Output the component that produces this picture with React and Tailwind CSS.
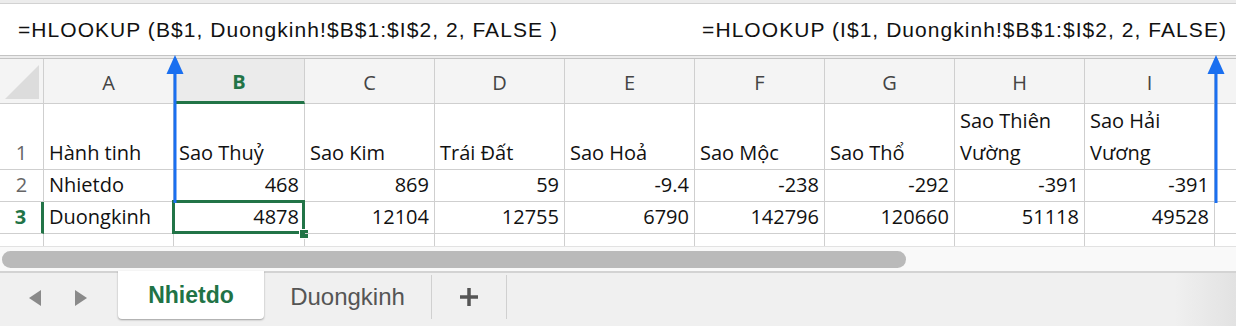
import React from 'react'

const cols = ['A', 'B', 'C', 'D', 'E', 'F', 'G', 'H', 'I']

const rows = [
  { n: '1', h: 'h-[66px]', cells: [['Hành tinh'], ['Sao Thuỷ'], ['Sao Kim'], ['Trái Đất'], ['Sao Hoả'], ['Sao Mộc'], ['Sao Thổ'], ['Sao Thiên', 'Vường'], ['Sao Hải', 'Vương']] },
  { n: '2', h: 'h-[32px]', cells: ['Nhietdo', 468, 869, 59, -9.4, -238, -292, -391, -391] },
  { n: '3', h: 'h-[32px]', cells: ['Duongkinh', 4878, 12104, 12755, 6790, 142796, 120660, 51118, 49528], active: true },
]

const gridCols = 'grid grid-cols-[44px_130px_131px_130px_130px_130px_130px_130px_130px_130px_1fr]'

const Arrow = ({ className }) => (
  <svg className={className} width="18" height="148" viewBox="0 0 18 148">
    <path d="M9 0 L17.5 19 L0.5 19 Z" fill="#1a6ff0" />
    <rect x="7.5" y="17" width="3" height="131" fill="#1a6ff0" />
  </svg>
)

function Cell({ v }) {
  if (Array.isArray(v)) {
    return (
      <div className="flex flex-col justify-end pl-[5px] leading-[32px]">
        {v.map(t => <span key={t} className="whitespace-nowrap">{t}</span>)}
      </div>
    )
  }
  const num = typeof v === 'number'
  return (
    <div className={`flex items-center h-full leading-[32px] ${num ? 'justify-end pr-[5px]' : 'pl-[5px]'}`}>{v}</div>
  )
}

export default function App() {
  return (
    <div className="relative w-[1236px] h-[326px] overflow-hidden bg-white" style={{ fontFamily: '"Open Sans", Lato, sans-serif' }}>
      {/* formula bar */}
      <div className="h-[4px] bg-[#ececec] border-b border-[#d2d2d2]" />
      <div className="h-[51px] flex items-center justify-between pl-[18px] pr-[9px] text-[21px] tracking-[1.05px] text-[#111] bg-white" style={{ fontFamily: '"Liberation Sans", Arial, sans-serif' }}>
        <span>=HLOOKUP (B$1, Duongkinh!$B$1:$I$2, 2, FALSE )</span>
        <span>=HLOOKUP (I$1, Duongkinh!$B$1:$I$2, 2, FALSE)</span>
      </div>
      <div className="h-[4px] border-y border-[#c4c4c4] bg-[#ececec]" />

      {/* sheet grid */}
      <div className={`${gridCols} text-[20px] text-[#111]`}>
        {/* header row */}
        <div className="relative h-[45px] bg-[#f4f4f4] border-r border-b border-[#cfcfcf]">
          <div className="absolute right-[4px] bottom-[4px] w-0 h-0 border-l-[34px] border-l-transparent border-b-[34px] border-b-[#dcdcdc]" />
        </div>
        {cols.map(c => (
          <div key={c} className={`h-[45px] flex items-center justify-center pt-[4px] border-r border-[#cfcfcf] ${c === 'B' ? 'bg-[#ebebeb] border-b-[3px] border-b-[#227447] text-[#227447] font-bold' : 'bg-[#f4f4f4] border-b border-b-[#cfcfcf] text-[#444]'}`}>{c}</div>
        ))}
        <div className="h-[45px] bg-[#f4f4f4] border-b border-[#cfcfcf]" />

        {rows.map(r => (
          <React.Fragment key={r.n}>
            <div className={`${r.h} flex items-end justify-center leading-[32px] border-b border-[#cfcfcf] ${r.active ? 'text-[#227447] font-bold border-r-[3px] border-r-[#227447]' : 'text-[#666] border-r border-r-[#cfcfcf]'}`}>{r.n}</div>
            {r.cells.map((v, i) => (
              <div key={i} className={`${r.h} relative flex items-end border-r border-b border-[#cfcfcf]`}>
                <div className="w-full"><Cell v={v} /></div>
                {r.active && i === 1 && (
                  <>
                    <div className="absolute -left-[2px] -top-[2px] -right-[1px] -bottom-[1px] border-[3px] border-[#227447]" />
                    <div className="absolute -right-[5px] -bottom-[6px] w-[10px] h-[10px] bg-[#227447] border border-white" />
                  </>
                )}
              </div>
            ))}
            <div className={`${r.h} border-b border-[#cfcfcf]`} />
          </React.Fragment>
        ))}

        {/* partial row 4 */}
        {Array.from({ length: 11 }).map((_, i) => (
          <div key={i} className={`h-[12px] ${i < 10 ? 'border-r border-[#cfcfcf]' : ''}`} />
        ))}
      </div>

      {/* horizontal scrollbar */}
      <div className="h-[25px] bg-[#f9f9f9] border-t border-[#e2e2e2] flex items-center px-[2px]">
        <div className="w-[904px] h-[17px] rounded-full bg-[#bababa]" />
      </div>

      {/* sheet tabs */}
      <div className="h-[55px] border-t-2 border-[#d3d3d3] bg-gradient-to-r from-[#f0f0f0] via-[#f0f0f0] via-95% to-[#e2e2e2] flex items-start">
        <div className="w-[118px] h-[50px] flex items-center gap-[32px] pl-[28px]">
          <svg width="14" height="18" viewBox="0 0 14 18"><path d="M13 1 L1 9 L13 17 Z" fill="#8a8a8a" /></svg>
          <svg width="14" height="18" viewBox="0 0 14 18"><path d="M1 1 L13 9 L1 17 Z" fill="#8a8a8a" /></svg>
        </div>
        <div className="w-[146px] h-[48px] -mt-[2px] bg-white rounded-b-[4px] shadow-[0_1px_2px_rgba(0,0,0,0.35)] flex items-center justify-center text-[23px] font-bold text-[#217346]" style={{ fontFamily: '"Liberation Sans", Arial, sans-serif' }}>Nhietdo</div>
        <div className="w-[168px] h-[44px] mt-[2px] border-r border-[#d0d0d0] flex items-center justify-center text-[24px] text-[#555]" style={{ fontFamily: '"Liberation Sans", Arial, sans-serif' }}>Duongkinh</div>
        <div className="w-[75px] h-[44px] mt-[2px] border-r border-[#d0d0d0] flex items-center justify-center">
          <svg width="20" height="20" viewBox="0 0 20 20"><path d="M10 1 V19 M1 10 H19" stroke="#555" strokeWidth="3.5" /></svg>
        </div>
      </div>

      {/* overlay arrows */}
      <Arrow className="absolute left-[166px] top-[55px]" />
      <Arrow className="absolute left-[1207px] top-[55px]" />
    </div>
  )
}
